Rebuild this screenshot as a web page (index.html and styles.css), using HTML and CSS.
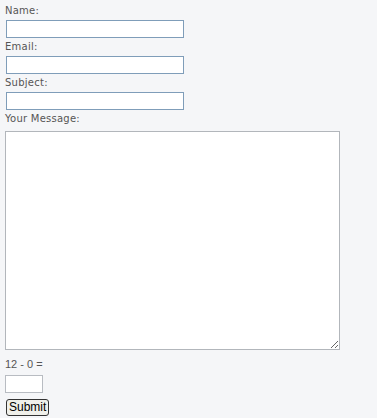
FILE: index.html
```html
<!DOCTYPE html>
<html lang="en">
<head>
    <meta charset="UTF-8">
    <meta name="viewport" content="width=device-width, initial-scale=1.0">
    <title>Contact</title>
    <link rel="stylesheet" href="styles.css">
</head>
<body>
    <form id="contactForm" class="contact-form">
        <label for="name">Name:</label>
        <input type="text" id="name" class="field">
        <label for="email">Email:</label>
        <input type="text" id="email" class="field">
        <label for="subject">Subject:</label>
        <input type="text" id="subject" class="field">
        <label for="message">Your Message:</label>
        <textarea id="message" class="message"></textarea>
        <div class="captcha-label">12 - 0 =</div>
        <input type="text" id="captcha" class="captcha">
        <button type="button" class="submit-button">Submit</button>
    </form>
</body>
</html>
```

FILE: styles.css
```css
body {
    margin: 0;
    padding: 2px 0 0 5px;
    background-color: #f5f6f8;
    font-family: "DejaVu Sans", Verdana, sans-serif;
    font-size: 10px;
    color: #555;
}

.contact-form {
    display: flex;
    flex-direction: column;
    align-items: flex-start;
}

.contact-form label {
    display: block;
    height: 18px;
    line-height: 18px;
    letter-spacing: 0.25px;
}

.field {
    box-sizing: border-box;
    width: 178px;
    height: 18px;
    margin: 0 0 0 1px;
    padding: 0 2px;
    border: 1px solid #7f9db9;
    background-color: #fff;
    font-size: 11px;
}

.message {
    box-sizing: border-box;
    width: 335px;
    height: 219px;
    margin: 3px 0 0 0;
    border: 1px solid #b2b6bb;
    background-color: #fff;
    resize: both;
}

.captcha-label {
    margin-top: 5px;
    height: 18px;
    line-height: 18px;
    font-family: "Liberation Sans", Arial, sans-serif;
    font-size: 11px;
}

.captcha {
    box-sizing: border-box;
    width: 38px;
    height: 18px;
    margin: 2px 0 0 0;
    padding: 0 2px;
    border: 1px solid #b8bcc2;
    background-color: #fff;
}

.submit-button {
    box-sizing: border-box;
    margin: 6px 0 0 1px;
    padding: 0 2px;
    height: 17px;
    font-family: "Liberation Sans", Arial, sans-serif;
    font-size: 12px;
    color: #000;
    background-color: #f0f0ea;
    border: 1px solid #333;
    border-radius: 3px;
    line-height: 15px;
}
```
